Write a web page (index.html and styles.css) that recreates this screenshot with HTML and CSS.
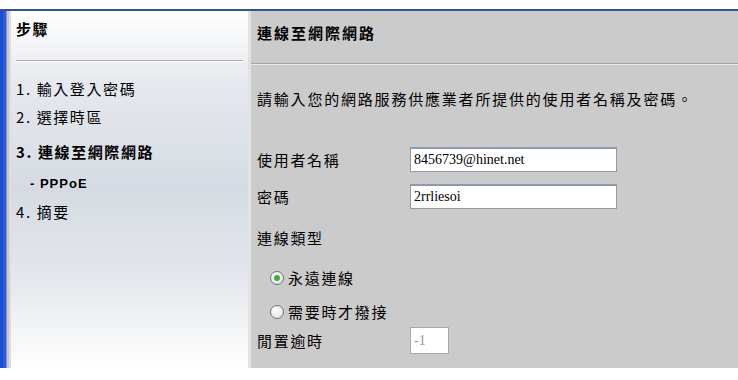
FILE: index.html
```html
<!DOCTYPE html>
<html lang="zh-Hant">
<head>
  <meta charset="UTF-8">
  <title>連線至網際網路</title>
  <link rel="stylesheet" href="styles.css">
</head>
<body>

  <div class="wizard">
    <div class="edge"></div>

    <div class="steps">
      <div class="steps-title">步驟</div>
      <div class="rule"></div>
      <ul class="step-list">
        <li class="step">1. 輸入登入密碼</li>
        <li class="step step-near">2. 選擇時區</li>
        <li class="step step-current">3. 連線至網際網路</li>
        <li class="step step-sub">- PPPoE</li>
        <li class="step step-near">4. 摘要</li>
      </ul>
    </div>

    <div class="gutter"></div>

    <div class="panel">
      <div class="panel-title">連線至網際網路</div>
      <div class="panel-body">
        <p class="intro">請輸入您的網路服務供應業者所提供的使用者名稱及密碼。</p>

        <div class="field field-user">
          <label>使用者名稱</label>
          <input type="text" value="8456739@hinet.net">
        </div>
        <div class="field field-pass">
          <label>密碼</label>
          <input type="text" value="2rrliesoi">
        </div>

        <div class="group-label">連線類型</div>

        <div class="radio radio-first">
          <span class="dot checked"></span>永遠連線
        </div>
        <div class="radio radio-second">
          <span class="dot"></span>需要時才撥接
        </div>

        <div class="field field-idle">
          <label>閒置逾時</label>
          <input type="text" class="short" value="-1" disabled>
        </div>
      </div>
    </div>
  </div>

</body>
</html>
```

FILE: styles.css
```css
body {
  margin: 0;
  padding-top: 9px;
  background: #fff;
  font-family: "Noto Sans CJK TC", "Liberation Sans", sans-serif;
  font-size: 15px;
  color: #000;
}

.wizard {
  display: flex;
  height: 357px;
  border-top: 2px solid #33558c;
}

.edge {
  width: 11px;
  flex: none;
  background: linear-gradient(to right, #1d4cd4 0 3px, #2d5bd2 3px 6px, #7b97d6 6px 7px, #c6c6c6 7px 9px, #dcdcdc 9px 11px);
}

/* left column */
.steps {
  width: 237px;
  flex: none;
  background: linear-gradient(#ffffff 0%, #e6e9ee 20%, #d6dbe3 50%, #e4e7ec 75%, #ffffff 100%);
}

.steps-title {
  padding: 8px 0 0 5px;
  line-height: 20px;
  font-weight: bold;
  letter-spacing: 1.5px;
}

.rule {
  margin: 21px 5px 0 5px;
  border-top: 1px solid #aaa;
  border-bottom: 1px solid #fff;
}

.step-list {
  list-style: none;
  margin: 0;
  padding: 17px 0 0 5px;
}

.step {
  line-height: 20px;
  letter-spacing: 1.6px;
}

.step-near {
  margin-top: 8px;
}

.step-current {
  margin-top: 15px;
  font-weight: bold;
}

.step-sub {
  margin-top: 12px;
  padding-left: 14px;
  font-weight: bold;
  font-family: "Liberation Sans", sans-serif;
  font-size: 13px;
  letter-spacing: 1px;
}

.gutter {
  width: 3px;
  flex: none;
  background: #e2e2e2;
}

/* right panel */
.panel {
  flex: 1;
  background: #cbcbcb;
}

.panel-title {
  height: 40px;
  padding: 12px 0 0 6px;
  line-height: 20px;
  font-weight: bold;
  letter-spacing: 2px;
  border-bottom: 1px solid #a4a4a4;
  box-shadow: 0 1px 0 #e8e8e8;
}

.panel-body {
  padding: 0 0 0 6px;
}

.intro {
  margin: 0;
  padding-top: 25px;
  line-height: 20px;
  letter-spacing: 1.8px;
}

.field {
  display: flex;
  align-items: center;
}

.field label {
  width: 153px;
  letter-spacing: 1.7px;
}

.field input {
  width: 199px;
  height: 22px;
  padding: 0 3px;
  border: 1px solid #8c9aaa;
  border-top-width: 2px;
  background: #fff;
  font-family: "Liberation Serif", serif;
  font-size: 14px;
  color: #000;
}

.field input.short {
  width: 31px;
  height: 25px;
  border: 1px solid #a8a8a8;
  color: #999;
}

.field-user {
  margin-top: 38px;
}

.field-pass {
  margin-top: 12px;
}

.field-idle {
  margin-top: 5px;
}

.group-label {
  margin-top: 19px;
  line-height: 20px;
  letter-spacing: 1.7px;
}

.radio {
  display: flex;
  align-items: center;
  line-height: 20px;
  padding-left: 13px;
  letter-spacing: 1.7px;
}

.radio-first {
  margin-top: 20px;
}

.radio-second {
  margin-top: 14px;
}

.dot {
  width: 12px;
  height: 12px;
  margin-right: 4px;
  border: 1px solid #6a7580;
  border-radius: 50%;
  background: radial-gradient(circle at 40% 35%, #fff, #dcdcdc);
  position: relative;
}

.dot.checked::after {
  content: "";
  position: absolute;
  left: 3px;
  top: 3px;
  width: 6px;
  height: 6px;
  border-radius: 50%;
  background: #3fae3f;
}
```
